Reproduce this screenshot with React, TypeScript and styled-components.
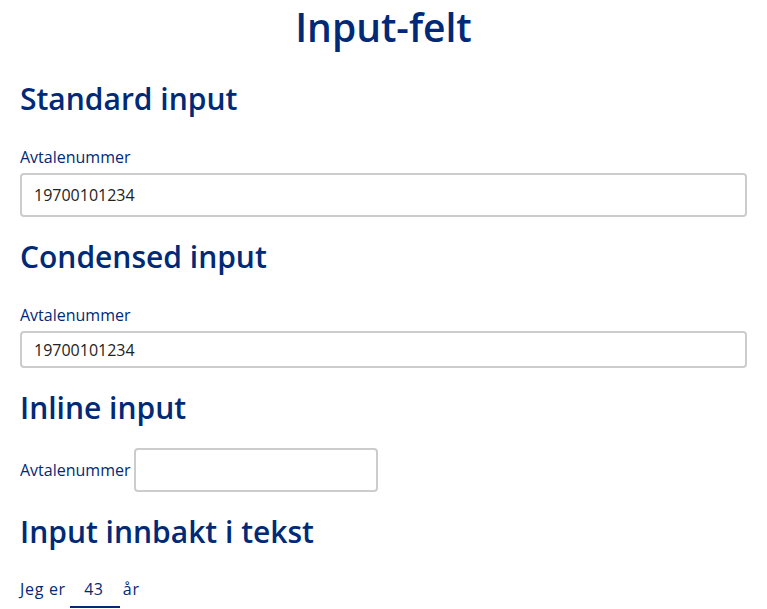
import React from "react";
import styled, { createGlobalStyle } from "styled-components";

const GlobalStyle = createGlobalStyle`
  html, body { margin: 0; padding: 0; background: #ffffff; }
  body { font-family: "Open Sans", "Noto Sans", sans-serif; color: #222; }
  * { box-sizing: border-box; }
`;

const navy = "#002a77";

const Page = styled.main`
  padding: 0 20px;
`;

const Title = styled.h1`
  margin: 0;
  font-size: 39px;
  line-height: 54px;
  font-weight: 600;
  color: ${navy};
  text-align: center;
`;

const Section = styled.section`
  padding-top: 22px;
  &:first-of-type { padding-top: 27px; }
`;

const Heading = styled.h2`
  margin: 0 0 22px;
  font-size: 30px;
  line-height: 36px;
  font-weight: 600;
  color: ${navy};
`;

const Field = styled.div`
  display: flex;
  flex-direction: column;
  padding-top: 8px;
`;

const Label = styled.label`
  font-size: 16px;
  line-height: 20px;
  color: ${navy};
  margin-bottom: 6px;
`;

const TextInput = styled.input<{ $condensed?: boolean }>`
  width: 100%;
  height: ${(p) => (p.$condensed ? "37px" : "44px")};
  border: 2px solid #cccccc;
  border-radius: 4px;
  padding: 0 12px;
  font-family: inherit;
  font-size: 16px;
  color: #222;
  background: #fff;
  outline: none;
`;

const InlineRow = styled.div`
  display: flex;
  align-items: center;
  gap: 4px;
`;

const InlineLabel = styled.label`
  font-size: 16px;
  line-height: 20px;
  color: ${navy};
`;

const InlineInput = styled(TextInput)`
  width: 244px;
  height: 44px;
  margin-left: -1px;
`;

const Sentence = styled.p`
  margin: 1px 0 0;
  display: flex;
  align-items: baseline;
  font-size: 16px;
  line-height: 20px;
  letter-spacing: 0.7px;
  color: ${navy};
`;

const EmbeddedInput = styled.input`
  width: 50px;
  height: 36px;
  margin: 0 3px 0 4px;
  padding: 0 2px 0 0;
  border: none;
  border-bottom: 2px solid ${navy};
  font-family: inherit;
  font-size: 16px;
  letter-spacing: 0.4px;
  color: ${navy};
  text-align: center;
  background: transparent;
  outline: none;
`;

export default function App() {
  return (
    <>
      <GlobalStyle />
      <Page>
        <Title>Input-felt</Title>
        <Section>
          <Heading>Standard input</Heading>
          <Field>
            <Label>Avtalenummer</Label>
            <TextInput defaultValue="19700101234" />
          </Field>
        </Section>
        <Section>
          <Heading>Condensed input</Heading>
          <Field>
            <Label>Avtalenummer</Label>
            <TextInput $condensed defaultValue="19700101234" />
          </Field>
        </Section>
        <Section>
          <Heading>Inline input</Heading>
          <InlineRow>
            <InlineLabel>Avtalenummer</InlineLabel>
            <InlineInput />
          </InlineRow>
        </Section>
        <Section>
          <Heading>Input innbakt i tekst</Heading>
          <Sentence>
            <span>Jeg er</span>
            <EmbeddedInput defaultValue="43" />
            <span>år</span>
          </Sentence>
        </Section>
      </Page>
    </>
  );
}
